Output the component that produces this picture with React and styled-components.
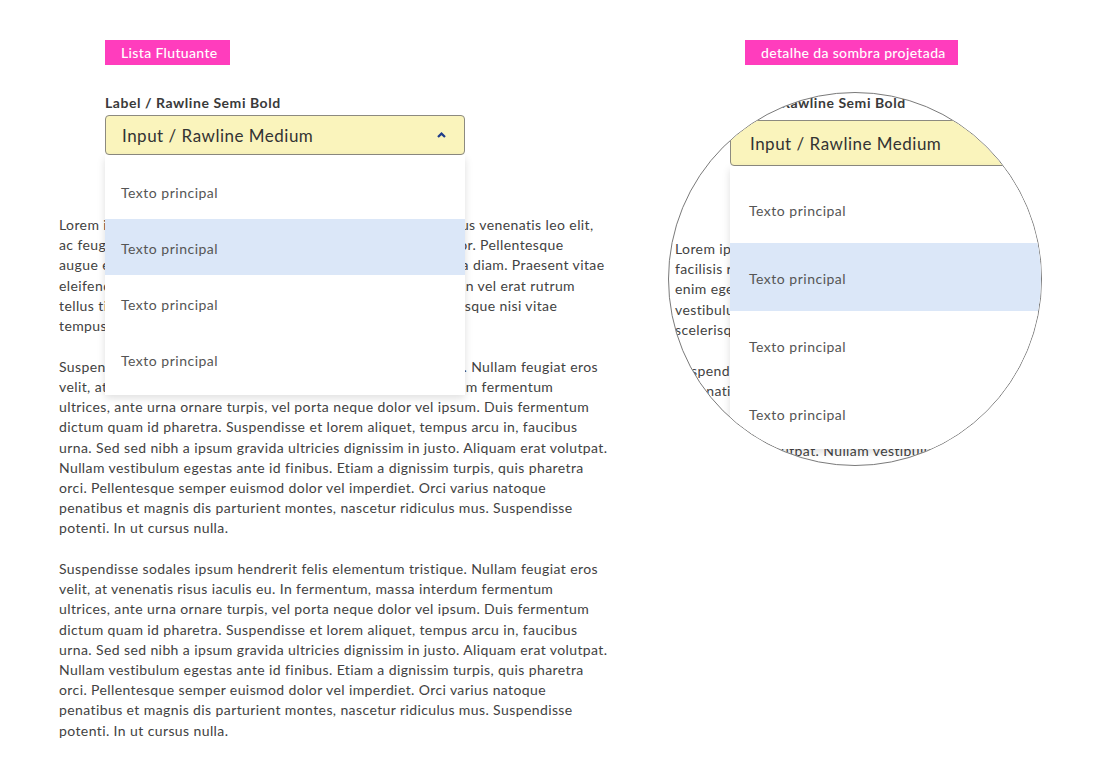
import React from 'react';
import styled, { createGlobalStyle, css } from 'styled-components';

const GlobalStyle = createGlobalStyle`
  body {
    margin: 0;
    background: #ffffff;
    font-family: Lato, "Open Sans", sans-serif;
    color: #424242;
  }
`;

const Page = styled.div`
  display: flex;
  align-items: flex-start;
  padding-top: 40px;
  width: 1100px;
  height: 743px;
  overflow: hidden;
`;

const LeftColumn = styled.div`
  width: 668px;
  box-sizing: border-box;
  padding-left: 59px;
  display: flex;
  flex-direction: column;
`;

const RightColumn = styled.div`
  display: flex;
  flex-direction: column;
  align-items: flex-start;
`;

const Tag = styled.span`
  align-self: flex-start;
  margin-left: ${p => p.offset}px;
  height: 25px;
  line-height: 25px;
  padding: 0 12px 0 16px;
  background: #ff3dbd;
  color: #ffffff;
  font-size: 14px;
  font-weight: 500;
  letter-spacing: 0.35px;
`;

const FieldWrap = styled.div`
  position: relative;
  width: ${p => (p.zoom ? 432 : 360)}px;
  margin-left: ${p => (p.zoom ? 55 : 46)}px;
  margin-top: ${p => (p.zoom ? 0 : 31)}px;
`;

const Label = styled.div`
  font-size: 14px;
  line-height: 14px;
  font-weight: 700;
  letter-spacing: 0.55px;
  color: #3a3a3a;
  margin-bottom: ${p => (p.zoom ? 10 : 5)}px;
  white-space: nowrap;
`;

const InputBox = styled.div`
  box-sizing: border-box;
  height: ${p => (p.zoom ? 46 : 40)}px;
  display: flex;
  align-items: center;
  justify-content: space-between;
  padding: 0 18px 0 ${p => (p.zoom ? 19 : 16)}px;
  background: #faf4bc;
  border: 1px solid #8c8a80;
  border-radius: 4px;
  font-size: 17px;
  letter-spacing: 0.5px;
  color: #333333;
  white-space: nowrap;
`;

const Chevron = styled.svg`
  width: 9px;
  height: 6px;
  flex-shrink: 0;
`;

const Dropdown = styled.ul`
  position: absolute;
  top: 100%;
  left: 0;
  right: 0;
  margin: 0;
  list-style: none;
  background: #ffffff;
  box-shadow: 0 3px 8px rgba(0, 0, 0, 0.13);
  z-index: 2;
  ${p =>
    p.zoom
      ? css`
          padding: 9px 0 2px;
        `
      : css`
          padding: 8px 0;
        `}
`;

const Option = styled.li`
  box-sizing: border-box;
  height: ${p => (p.zoom ? 68 : 56)}px;
  display: flex;
  align-items: center;
  padding: 3px 0 0 ${p => (p.zoom ? 19 : 16)}px;
  font-size: 14px;
  font-weight: 400;
  letter-spacing: 0.5px;
  color: #555555;
  background: ${p => (p.active ? '#dbe7f8' : 'transparent')};
`;

const TextBlock = styled.div`
  margin-top: ${p => (p.zoom ? 73 : 60)}px;
  display: flex;
  flex-direction: column;
  gap: 20.5px;
`;

const Paragraph = styled.p`
  margin: 0;
  font-size: 14px;
  line-height: 20.2px;
  letter-spacing: 0.4px;
  color: #424242;
  white-space: pre;
`;

const Lens = styled.div`
  margin-top: 27px;
  width: 374px;
  height: 374px;
  box-sizing: border-box;
  border: 1px solid #7a7a7a;
  border-radius: 50%;
  overflow: hidden;
  background: #ffffff;
`;

const LensContent = styled.div`
  padding: 3px 0 0 6px;
  display: flex;
  flex-direction: column;
`;

const options = ['Texto principal', 'Texto principal', 'Texto principal', 'Texto principal'];

const introText = `Lorem ipsum dolor sit amet, consectetur adipiscing elit. Vivamus venenatis leo elit,
ac feugiat magna nunc dapibus non. Nunc facilisis rutrum tortor. Pellentesque
augue enim, egestas quis luctus non, ac commodo vestibulum a diam. Praesent vitae
eleifend nisl, sed consequat turpis vel lectus. Nulla facilisi. Proin vel erat rutrum
tellus tincidunt ut pretium. Aenean non laoreet eget mi, scelerisque nisi vitae
tempus lorem.`;

const bodyText = `Suspendisse sodales ipsum hendrerit felis elementum tristique. Nullam feugiat eros
velit, at venenatis risus iaculis eu. In fermentum, massa interdum fermentum
ultrices, ante urna ornare turpis, vel porta neque dolor vel ipsum. Duis fermentum
dictum quam id pharetra. Suspendisse et lorem aliquet, tempus arcu in, faucibus
urna. Sed sed nibh a ipsum gravida ultricies dignissim in justo. Aliquam erat volutpat.
Nullam vestibulum egestas ante id finibus. Etiam a dignissim turpis, quis pharetra
orci. Pellentesque semper euismod dolor vel imperdiet. Orci varius natoque
penatibus et magnis dis parturient montes, nascetur ridiculus mus. Suspendisse
potenti. In ut cursus nulla.`;

const lensIntro = `Lorem ipsum dolor sit amet, consectetur adipiscing elit.
facilisis rutrum tortor, non ultricies dapibus
enim egestas. Nunc luctus vel diam a
vestibulum. Praesent vitae eleifend nisl
scelerisque nisi vitae tempus.`;

const lensBody = `Suspendisse sodales ipsum hendrerit felis
venenatis risus iaculis eu. In fermentum
ultrices, ante urna ornare turpis
dictum quam id pharetra. Suspendisse
Aliquam erat volutpat. Nullam vestibulum egestas
Etiam a dignissim turpis, quis pharetra`;

const FloatingSelect = ({ zoom }) => (
  <FieldWrap zoom={zoom}>
    <Label zoom={zoom}>Label / Rawline Semi Bold</Label>
    <InputBox zoom={zoom}>
      Input / Rawline Medium
      <Chevron viewBox="0 0 9 6">
        <polyline points="1,5 4.5,1.6 8,5" fill="none" stroke="#1f3d8a" strokeWidth="2.2" />
      </Chevron>
    </InputBox>
    <Dropdown zoom={zoom}>
      {options.map((label, i) => (
        <Option key={i} zoom={zoom} active={i === 1}>
          {label}
        </Option>
      ))}
    </Dropdown>
  </FieldWrap>
);

const App = () => (
  <>
    <GlobalStyle />
    <Page>
      <LeftColumn>
        <Tag offset={46}>Lista Flutuante</Tag>
        <FloatingSelect />
        <TextBlock>
          <Paragraph>{introText}</Paragraph>
          <Paragraph>{bodyText}</Paragraph>
          <Paragraph>{bodyText}</Paragraph>
        </TextBlock>
      </LeftColumn>

      <RightColumn>
        <Tag offset={77}>detalhe da sombra projetada</Tag>
        <Lens>
          <LensContent>
            <FloatingSelect zoom />
            <TextBlock zoom>
              <Paragraph>{lensIntro}</Paragraph>
              <Paragraph>{lensBody}</Paragraph>
            </TextBlock>
          </LensContent>
        </Lens>
      </RightColumn>
    </Page>
  </>
);

export default App;
